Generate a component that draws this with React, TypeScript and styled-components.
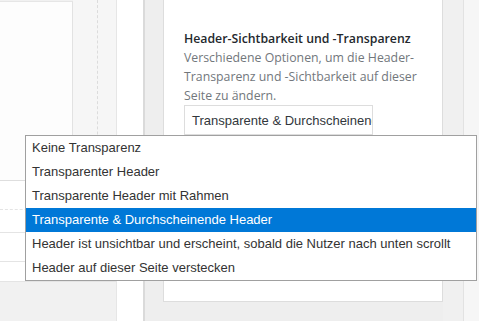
import styled, { createGlobalStyle } from "styled-components";

const GlobalStyle = createGlobalStyle`
  html, body {
    margin: 0;
    padding: 0;
    background: #f1f1f1;
  }
  body {
    width: 479px;
    height: 321px;
    overflow: hidden;
  }
`;

const Page = styled.div`
  position: relative;
  display: flex;
  width: 479px;
  height: 321px;
  overflow: hidden;
  font-family: "Open Sans", "Liberation Sans", sans-serif;
`;

const LeftPane = styled.div`
  width: 116px;
  display: flex;
  flex-direction: column;
`;

const TopArea = styled.div`
  height: 180px;
  display: flex;
`;

const WhiteBox = styled.div`
  width: 72px;
  margin-top: 1px;
  background: #fdfdfd;
  border-top: 1px solid #e6e6e6;
  border-right: 1px solid #e2e2e2;
`;

const Strip = styled.div`
  flex: 1;
  background: #f6f6f6;
  display: flex;
  padding-left: 24px;
`;

const DashedLine = styled.div`
  width: 0;
  border-left: 1px dashed #dcdcdc;
`;

const FormRows = styled.div`
  background: #fff;
  border-top: 1px solid #dedede;
  height: 101px;
  display: flex;
  flex-direction: column;
`;

const FormRow = styled.div<{ $h: number; $dashed?: boolean }>`
  height: ${(p) => p.$h}px;
  border-bottom: 1px ${(p) => (p.$dashed ? "dashed" : "solid")} #e4e4e4;
`;

const MidCol = styled.div`
  width: 26px;
  background: #fff;
  border-left: 1px solid #e6e6e6;
  border-right: 2px solid #dadada;
`;

const Gutter = styled.div<{ $w: number; $bg: string }>`
  width: ${(p) => p.$w}px;
  background: ${(p) => p.$bg};
`;

const CardCol = styled.div`
  width: 280px;
  display: flex;
  flex-direction: column;
  background: #eeeeee;
`;

const Card = styled.div`
  height: 302px;
  background: #fff;
  border: 1px solid #dddddd;
  border-top: none;
  padding: 29px 20px 0 20px;
  box-sizing: border-box;
`;

const Heading = styled.div`
  font-size: 12.3px;
  line-height: 19px;
  font-weight: 600;
  color: #23282d;
  white-space: nowrap;
`;

const Desc = styled.div`
  font-size: 12.3px;
  line-height: 19px;
  color: #72777c;
  width: 238px;
`;

const SelectBox = styled.div`
  width: 189px;
  height: 30px;
  box-sizing: border-box;
  border: 1px solid #dddddd;
  background: #fff;
  padding: 0 7px;
  display: flex;
  align-items: center;
  overflow: hidden;
  white-space: nowrap;
  font-family: "Liberation Sans", Arial, sans-serif;
  font-size: 13px;
  color: #32373c;
`;

const RightEdge = styled.div`
  flex: 1;
  background: #f6f6f6;
  border-left: 1px solid #e2e2e2;
`;

const Dropdown = styled.ul`
  position: absolute;
  left: 25px;
  top: 135px;
  width: 450px;
  margin: 0;
  padding: 0;
  list-style: none;
  background: #fff;
  border: 1px solid #a0a0a0;
  font-family: "Liberation Sans", Arial, sans-serif;
  font-size: 13px;
`;

const Option = styled.li<{ $active?: boolean }>`
  height: 24px;
  line-height: 24px;
  padding-left: 6px;
  white-space: nowrap;
  color: ${(p) => (p.$active ? "#fff" : "#333")};
  background: ${(p) => (p.$active ? "#0078d7" : "transparent")};
`;

const options = [
  "Keine Transparenz",
  "Transparenter Header",
  "Transparente Header mit Rahmen",
  "Transparente & Durchscheinende Header",
  "Header ist unsichtbar und erscheint, sobald die Nutzer nach unten scrollt",
  "Header auf dieser Seite verstecken",
];

export default function App() {
  return (
    <Page>
      <GlobalStyle />
      <LeftPane>
        <TopArea>
          <WhiteBox />
          <Strip>
            <DashedLine />
          </Strip>
        </TopArea>
        <FormRows>
          <FormRow $h={28} $dashed />
          <FormRow $h={23} />
          <FormRow $h={28} />
          <FormRow $h={19} />
        </FormRows>
      </LeftPane>
      <MidCol />
      <Gutter $w={18} $bg="#eeeeee" />
      <CardCol>
        <Card>
          <Heading>Header-Sichtbarkeit und -Transparenz</Heading>
          <Desc>
            Verschiedene Optionen, um die Header-Transparenz und -Sichtbarkeit
            auf dieser Seite zu ändern.
          </Desc>
          <SelectBox>Transparente &amp; Durchscheinende Header</SelectBox>
        </Card>
      </CardCol>
      <Gutter $w={20} $bg="#f0f0f0" />
      <RightEdge />
      <Dropdown>
        {options.map((o, i) => (
          <Option key={o} $active={i === 3}>
            {o}
          </Option>
        ))}
      </Dropdown>
    </Page>
  );
}
